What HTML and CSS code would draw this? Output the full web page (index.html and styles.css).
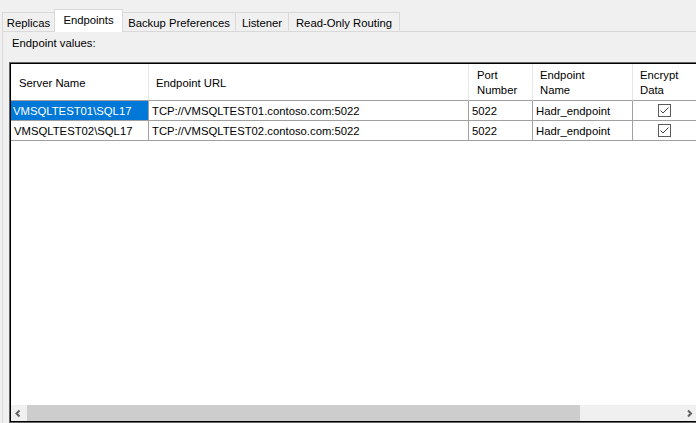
FILE: index.html
```html
<!DOCTYPE html>
<html>
<head>
<meta charset="utf-8">
<title>Availability Group Properties</title>
<link rel="stylesheet" href="styles.css">
</head>
<body>
<div class="window">
  <div class="tabstrip">
    <div class="tab t-replicas">Replicas</div>
    <div class="tab t-endpoints active">Endpoints</div>
    <div class="tab t-backup">Backup Preferences</div>
    <div class="tab t-listener">Listener</div>
    <div class="tab t-routing">Read-Only Routing</div>
  </div>
  <div class="panel">
    <div class="label">Endpoint values:</div>
    <div class="gridframe">
      <div class="gridbody">
        <div class="table">
          <div class="hcell">Server Name</div>
          <div class="hcell">Endpoint URL</div>
          <div class="hcell">Port<br>Number</div>
          <div class="hcell">Endpoint<br>Name</div>
          <div class="hcell">Encrypt<br>Data</div>

          <div class="cell selected">VMSQLTEST01\SQL17</div>
          <div class="cell">TCP://VMSQLTEST01.contoso.com:5022</div>
          <div class="cell">5022</div>
          <div class="cell">Hadr_endpoint</div>
          <div class="cell check"><svg width="13" height="13" viewBox="0 0 13 13"><rect x="0.5" y="0.5" width="12" height="12" fill="#fff" stroke="#5a5a5a"/><polyline points="2.5,6.5 5,9 10.5,3.5" fill="none" stroke="#444" stroke-width="1"/></svg></div>

          <div class="cell">VMSQLTEST02\SQL17</div>
          <div class="cell">TCP://VMSQLTEST02.contoso.com:5022</div>
          <div class="cell">5022</div>
          <div class="cell">Hadr_endpoint</div>
          <div class="cell check"><svg width="13" height="13" viewBox="0 0 13 13"><rect x="0.5" y="0.5" width="12" height="12" fill="#fff" stroke="#5a5a5a"/><polyline points="2.5,6.5 5,9 10.5,3.5" fill="none" stroke="#444" stroke-width="1"/></svg></div>
        </div>
      </div>
      <div class="hscroll">
        <div class="sbtn"><svg width="16" height="16" viewBox="0 0 16 16"><polyline points="8.5,5.5 5.5,8.5 8.5,11.5" fill="none" stroke="#606060" stroke-width="2"/></svg></div>
        <div class="thumb"></div>
        <div class="track"></div>
        <div class="sbtn"><svg width="16" height="16" viewBox="0 0 16 16"><polyline points="7,5.5 10,8.5 7,11.5" fill="none" stroke="#606060" stroke-width="2"/></svg></div>
      </div>
    </div>
  </div>
</div>
</body>
</html>
```

FILE: styles.css
```css
* { box-sizing: border-box; }
html, body {
  margin: 0;
  padding: 0;
}
body {
  width: 696px;
  height: 423px;
  overflow: hidden;
  background: #f0f0f0;
  font-family: "Segoe UI", "Liberation Sans", Arial, sans-serif;
  font-size: 11.3px;
  color: #000;
}
.window {
  width: 696px;
  height: 423px;
  display: flex;
  flex-direction: column;
}
.tabstrip {
  height: 31px;
  display: flex;
  align-items: flex-end;
  padding-left: 2px;
  flex: none;
}
.tab {
  height: 19px;
  line-height: 20px;
  text-align: center;
  border-top: 1px solid #d9d9d9;
  border-left: 1px solid #d9d9d9;
  background: #f0f0f0;
  white-space: nowrap;
}
.tab.active {
  height: 23px;
  line-height: 21px;
  margin-bottom: -1px;
  background: #fff;
  border-right: 1px solid #d9d9d9;
  position: relative;
  z-index: 1;
}
.tab.active + .tab { border-left: none; }
.t-replicas { width: 52px; }
.t-endpoints { width: 69px; }
.t-backup { width: 112px; }
.t-listener { width: 53px; }
.t-routing { width: 112px; border-right: 1px solid #d9d9d9; }

.panel {
  flex: 1;
  margin-left: 2px;
  border-top: 1px solid #d9d9d9;
  border-left: 1px solid #d9d9d9;
  display: flex;
  flex-direction: column;
  min-height: 0;
}
.label {
  padding: 4px 0 0 9px;
  line-height: 15px;
  height: 19px;
}
.gridframe {
  margin-top: 11px;
  margin-left: 6px;
  width: 690px;
  flex: 1;
  border: 1px solid #646464;
  box-shadow: inset 1px 1px 0 #000, inset -1px -1px 0 #000;
  padding: 1px;
  background: #fff;
  display: flex;
  flex-direction: column;
}
.gridbody {
  flex: 1;
  background: #fff;
  overflow: hidden;
}
.table {
  display: grid;
  grid-template-columns: 138px 320px 64px 100px 64px;
  grid-template-rows: 37px 20px 20px;
}
.hcell {
  border-right: 1px solid #e5e5e5;
  border-bottom: 1px solid #a0a0a0;
  padding-left: 8px;
  display: flex;
  align-items: center;
  line-height: 15px;
  padding-top: 2px;
}
.hcell:nth-child(2), .hcell:nth-child(4), .hcell:nth-child(5) { padding-left: 7px; }
.cell {
  border-right: 1px solid #a0a0a0;
  border-bottom: 1px solid #a0a0a0;
  padding-left: 3px;
  padding-top: 1px;
  line-height: 18px;
  white-space: nowrap;
}
.cell.selected {
  background: #0078d7;
  color: #fff;
  padding-left: 2px;
}
.cell.check {
  display: flex;
  align-items: center;
  justify-content: center;
  padding: 0;
}
.cell.check svg { display: block; }
.hscroll {
  height: 16px;
  flex: none;
  display: flex;
  background: #f0f0f0;
}
.sbtn {
  width: 16px;
  height: 16px;
  flex: none;
}
.sbtn svg { display: block; }
.thumb {
  width: 553px;
  background: #cdcdcd;
  flex: none;
}
.track { flex: 1; }
```
